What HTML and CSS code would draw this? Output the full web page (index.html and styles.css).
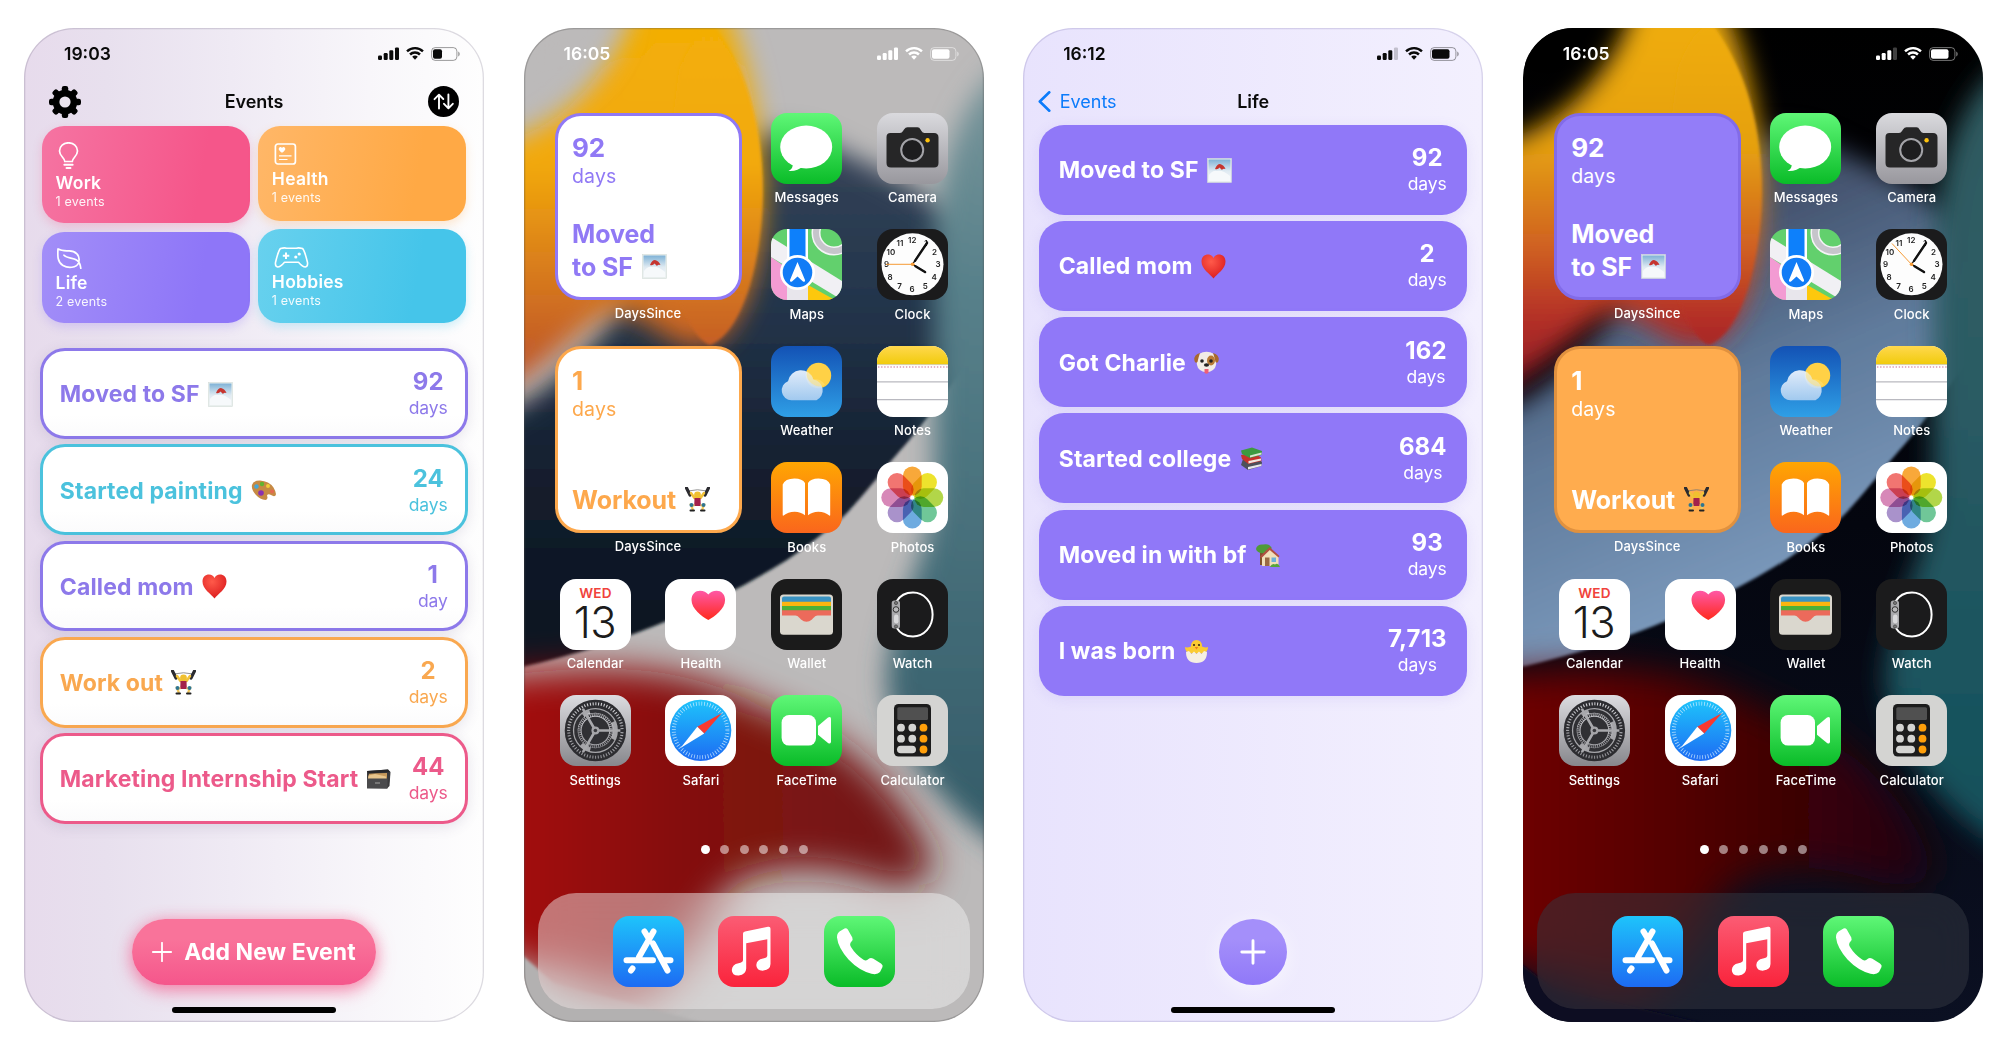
FILE: index.html
```html
<!DOCTYPE html>
<html lang="en">
<head>
<meta charset="utf-8">
<title>DaysSince</title>
<link rel="stylesheet" href="styles.css">
</head>
<body>
<svg class="defs" width="0" height="0" aria-hidden="true">
  <defs>
    <linearGradient id="g-green" x2="0" y2="1"><stop offset="0" stop-color="#5ff777"/><stop offset="1" stop-color="#0abc28"/></linearGradient>
    <linearGradient id="g-camera" x2="0" y2="1"><stop offset="0" stop-color="#dadade"/><stop offset="1" stop-color="#98979d"/></linearGradient>
    <linearGradient id="g-weather" x2="0" y2="1"><stop offset="0" stop-color="#1352b5"/><stop offset="1" stop-color="#2f9fe6"/></linearGradient>
    <linearGradient id="g-cloud" gradientUnits="userSpaceOnUse" x1="0" y1="22" x2="0" y2="55"><stop offset="0" stop-color="#f4f8ff"/><stop offset="1" stop-color="#a9cdf0"/></linearGradient>
    <linearGradient id="g-notes" x2="0" y2="1"><stop offset="0" stop-color="#ffd84e"/><stop offset="1" stop-color="#f1cb0c"/></linearGradient>
    <linearGradient id="g-books" x2="0" y2="1"><stop offset="0" stop-color="#ffa602"/><stop offset="1" stop-color="#fa661c"/></linearGradient>
    <linearGradient id="g-heart" x2="0" y2="1"><stop offset="0" stop-color="#ff58a6"/><stop offset="1" stop-color="#ff2a1c"/></linearGradient>
    <linearGradient id="g-settings" x2="0" y2="1"><stop offset="0" stop-color="#dcdce0"/><stop offset="1" stop-color="#87878c"/></linearGradient>
    <linearGradient id="g-blue" x2="0" y2="1"><stop offset="0" stop-color="#1ec4fb"/><stop offset="1" stop-color="#1d6bf3"/></linearGradient>
    <linearGradient id="g-music" x2="0" y2="1"><stop offset="0" stop-color="#fb5c74"/><stop offset="1" stop-color="#fa233b"/></linearGradient>
    <linearGradient id="g-sky" x2="0" y2="1"><stop offset="0" stop-color="#7fb2d6"/><stop offset=".55" stop-color="#dfeaf2"/><stop offset="1" stop-color="#f3f6f8"/></linearGradient>
    <radialGradient id="g-redheart" cx=".4" cy=".3" r=".8"><stop offset="0" stop-color="#ff5a4a"/><stop offset="1" stop-color="#d8161a"/></radialGradient>
    <linearGradient id="petal-light" gradientUnits="userSpaceOnUse" x1="0" y1="0" x2="0" y2="340"><stop offset="0" stop-color="#f3ae06"/><stop offset=".4" stop-color="#f2a909"/><stop offset=".7" stop-color="#d97d1c"/><stop offset="1" stop-color="#bf5528"/></linearGradient>
    <linearGradient id="petal-dark" gradientUnits="userSpaceOnUse" x1="0" y1="0" x2="0" y2="340"><stop offset="0" stop-color="#efac0e"/><stop offset=".35" stop-color="#e5a010"/><stop offset=".65" stop-color="#cf5f22"/><stop offset=".85" stop-color="#b42f26"/><stop offset="1" stop-color="#9c2226"/></linearGradient>
    <linearGradient id="sea-light" x2="0" y2="1"><stop offset="0" stop-color="#3a4759"/><stop offset=".35" stop-color="#24364d"/><stop offset=".7" stop-color="#121c2b"/><stop offset="1" stop-color="#0d1320"/></linearGradient>
    <linearGradient id="sea-dark" x1="0" x2=".35" y1="0" y2="1"><stop offset="0" stop-color="#151b2b"/><stop offset=".3" stop-color="#3f4c66"/><stop offset=".6" stop-color="#5f7a9b"/><stop offset="1" stop-color="#809fc2"/></linearGradient>
    <linearGradient id="teal-light" x2="0" y2="1"><stop offset="0" stop-color="#7e999d"/><stop offset=".3" stop-color="#57808a"/><stop offset="1" stop-color="#315966"/></linearGradient>
    <linearGradient id="teal-dark" x2="0" y2="1"><stop offset="0" stop-color="#2f5a60"/><stop offset=".4" stop-color="#2c5b64"/><stop offset="1" stop-color="#0f4f5a"/></linearGradient>
    <linearGradient id="red-light"><stop offset="0" stop-color="#b00610"/><stop offset=".5" stop-color="#83100e"/><stop offset="1" stop-color="#701a17"/></linearGradient>
    <linearGradient id="red-dark"><stop offset="0" stop-color="#7a0207"/><stop offset=".5" stop-color="#520104"/><stop offset="1" stop-color="#200509"/></linearGradient>
    <linearGradient id="night" x2="0" y2="1"><stop offset="0" stop-color="#000"/><stop offset=".5" stop-color="#04060f"/><stop offset="1" stop-color="#0b1022"/></linearGradient>
    <filter id="soft" x="-30%" y="-30%" width="160%" height="160%"><feGaussianBlur stdDeviation="13"/></filter>
    <filter id="mist" x="-60%" y="-60%" width="220%" height="220%"><feGaussianBlur stdDeviation="18"/></filter>
    <filter id="edge" x="-10%" y="-10%" width="120%" height="120%"><feGaussianBlur stdDeviation="1.6"/></filter>
    <mask id="sea-mask" maskUnits="userSpaceOnUse" x="0" y="0" width="460" height="994"><path d="M-60 720V400Q40 370 100 270L225 110Q270 95 320 125Q400 160 450 205L520 260V720Z" fill="#fff" filter="url(#soft)"/></mask>

    <path id="w-petal" d="M118 -40H190C226 20 240 110 239 170C238 235 222 300 185 318C150 328 130 290 95 284C60 286 30 345 -50 375V120C30 110 80 60 118 -40Z"/>
    <path id="w-petal-edge" d="M155 40Q175 -10 192 0C224 45 239 100 239 165C238 235 218 305 186 317C165 310 140 250 140 160Z"/>
    <path id="w-sea" d="M-10 60H470V300C430 350 415 380 368 432C345 460 330 478 319 489Q292 512 263 532Q205 568 150 590Q75 622 -10 641Z"/>
    <path id="w-teal" d="M520 10C436 50 416 130 410 220V470C402 540 362 590 362 655C368 730 436 800 520 845Z"/>
    <path id="w-red" d="M-80 655C60 635 150 630 240 680C320 705 380 765 405 825C415 852 390 864 355 854C300 836 250 836 215 855C180 880 175 930 120 962C80 975 30 950 -80 900Z"/>

    <symbol id="i-signal" viewBox="0 0 21 13"><rect y="8.5" width="4" height="4.5" rx="1.2"/><rect x="5.7" y="6" width="4" height="7" rx="1.2"/><rect x="11.3" y="3.2" width="4" height="9.8" rx="1.2"/></symbol>
    <symbol id="i-wifi" viewBox="0 0 18 13"><path d="M9 0C5.5 0 2.400 1.300.2 3.500L1.900 5.300A10 10 0 0 1 16.100 5.300L17.800 3.500A12.500 12.500 0 0 0 9 0Z"/><path d="M9 4.300A8.200 8.200 0 0 0 3.200 6.600L4.900 8.400A5.900 5.900 0 0 1 13.100 8.400L14.800 6.600A8.200 8.200 0 0 0 9 4.300Z"/><path d="M9 8.600A4 4 0 0 0 6.200 9.800L9 12.800L11.800 9.800A4 4 0 0 0 9 8.600Z"/></symbol>

    <symbol id="a-messages" viewBox="0 0 71 71"><rect width="71" height="71" fill="url(#g-green)"/><ellipse cx="35.200" cy="34" rx="26" ry="21.500" fill="#fff"/><path d="M22 50Q22.500 55 17.500 58Q27 58.500 32 53Z" fill="#fff"/></symbol>
    <symbol id="a-camera" viewBox="0 0 71 71"><rect width="71" height="71" fill="url(#g-camera)"/><path d="M13.500 20H23Q25 20 26 18L27 16.500Q28.500 14.300 30.500 14.300H40.500Q42.500 14.300 43.500 16.500L44.500 18Q45.500 20 47.500 20H57Q61.500 20 61.500 24.500V50Q61.500 54.500 57 54.500H14Q9.500 54.500 9.500 50V24Q9.500 20 13.500 20Z" fill="#262627"/><circle cx="35.200" cy="37" r="11" fill="#1d1d1f" stroke="#a3a3a8" stroke-width="2"/><circle cx="50.600" cy="27.300" r="2.200" fill="#ffc20c"/></symbol>
    <symbol id="a-maps" viewBox="0 0 71 71"><rect width="71" height="71" fill="#62d06d"/><path d="M0 28L16 39V71H0Z" fill="#f39bd3"/><path d="M0 8L71 52V71L0 28Z" fill="#f1f0f4"/><path d="M37 56L64 71H37Z" fill="#fdc80d"/><path d="M16 35H37V71H16Z" fill="#e8e6ec"/><circle cx="63" cy="4" r="18" fill="none" stroke="#f4f4f6" stroke-width="9"/><circle cx="63" cy="4" r="18" fill="none" stroke="#c6c5cb" stroke-width="6"/><path d="M16 0H37V40H16Z" fill="#fff"/><path d="M18.500 0H34.500V40H18.500Z" fill="#0d80fb"/><circle cx="26.500" cy="43.500" r="17.500" fill="#fff"/><circle cx="26.500" cy="43.500" r="14.800" fill="#117cf6"/><path d="M26.500 33L34 51Q34.500 53.500 32 52.500L26.500 47.500L21 52.500Q18.500 53.500 19 51Z" fill="#fff"/></symbol>
    <symbol id="a-clock" viewBox="0 0 71 71"><rect width="71" height="71" fill="#1b1b1c"/><circle cx="35.500" cy="35.300" r="31" fill="#fdfdfd"/>
      <g font-family="Inter, sans-serif" font-size="8" font-weight="600" text-anchor="middle" fill="#222"><text x="35.200" y="13.800">12</text><text x="49" y="17">1</text><text x="57.500" y="26">2</text><text x="61" y="38.200">3</text><text x="57.200" y="50.500">4</text><text x="48.200" y="59.600">5</text><text x="35.200" y="63">6</text><text x="22.500" y="59.600">7</text><text x="13" y="50.500">8</text><text x="9.500" y="38.200">9</text><text x="14" y="26">10</text><text x="23" y="17">11</text></g>
      <path d="M35.500 35.300L50.500 13M35.500 35.300L48.500 43.300" stroke="#111" stroke-width="1.300" stroke-linecap="round"/><path d="M38 31.800L50 14M38.500 37.200L48 43" stroke="#111" stroke-width="2.400" stroke-linecap="round"/></symbol>
    <symbol id="a-weather" viewBox="0 0 71 71"><rect width="71" height="71" fill="url(#g-weather)"/><circle cx="47.500" cy="29.500" r="12.700" fill="#ffd146"/><g fill="url(#g-cloud)" opacity=".93"><path d="M20.500 54.300A9.900 9.900 0 0 1 17 35.200A13 13 0 0 1 42.300 33.500A11 11 0 0 1 45.500 54.300Z"/></g><path d="M36 25A13 13 0 0 1 42.300 33.500A10.500 10.500 0 0 1 54 39A12.700 12.700 0 0 1 36 25Z" fill="#ffe27a" opacity=".55"/></symbol>
    <symbol id="a-notes" viewBox="0 0 71 71"><rect width="71" height="71" fill="#fff"/><rect width="71" height="18.200" fill="url(#g-notes)"/><path d="M0 18.600H71" stroke="#c9c08f" stroke-width=".8"/><path d="M1 21H71" stroke="#dd9cb4" stroke-width="1.400" stroke-dasharray="1.400 1.700"/><path d="M0 35.800H71M0 53.600H71" stroke="#b9b9c0" stroke-width="1.200"/></symbol>
    <symbol id="a-books" viewBox="0 0 71 71"><rect width="71" height="71" fill="url(#g-books)"/><path d="M11.700 22.500Q14 16.800 23.500 16.600Q31.500 16.800 34 21V53.200Q29.500 49.600 23.500 49.700Q17 49.700 12.600 53.500Q11.700 54 11.700 53ZM59.200 22.500Q57 16.800 47.500 16.600Q39.500 16.800 37 21V53.200Q41.500 49.600 47.500 49.700Q54 49.700 58.300 53.500Q59.200 54 59.200 53Z" fill="#fff"/></symbol>
    <symbol id="a-photos" viewBox="0 0 71 71"><rect width="71" height="71" fill="#fff"/><g class="petals" transform="translate(35.300 35.600)"><rect x="-9.400" y="-31" width="18.800" height="29" rx="9.400" fill="#f79c1e"/><rect x="-9.400" y="-31" width="18.800" height="29" rx="9.400" fill="#ebe00f" transform="rotate(45)"/><rect x="-9.400" y="-31" width="18.800" height="29" rx="9.400" fill="#a8d12f" transform="rotate(90)"/><rect x="-9.400" y="-31" width="18.800" height="29" rx="9.400" fill="#5cc08a" transform="rotate(135)"/><rect x="-9.400" y="-31" width="18.800" height="29" rx="9.400" fill="#5a9fdc" transform="rotate(180)"/><rect x="-9.400" y="-31" width="18.800" height="29" rx="9.400" fill="#9d83c4" transform="rotate(225)"/><rect x="-9.400" y="-31" width="18.800" height="29" rx="9.400" fill="#d278ae" transform="rotate(270)"/><rect x="-9.400" y="-31" width="18.800" height="29" rx="9.400" fill="#f0625d" transform="rotate(315)"/></g></symbol>
    <symbol id="a-calendar" viewBox="0 0 71 71"><rect width="71" height="71" fill="#fff"/><g font-family="Inter, sans-serif" text-anchor="middle"><text x="35.500" y="18.500" font-size="13.600" font-weight="600" fill="#f0433c" letter-spacing=".2">WED</text><text x="34.800" y="58.500" font-size="43.500" font-weight="300" fill="#1c1c1c" letter-spacing="-.6">13</text></g></symbol>
    <symbol id="a-health" viewBox="0 0 71 71"><rect width="71" height="71" fill="#fff"/><path d="M43.300 41C37 37.500 26.500 30 26.500 21C26.500 15 30.500 11.700 35 11.700C38.500 11.700 41.500 13 43.300 15.500C45.100 13 48.100 11.700 51.600 11.700C56.100 11.700 60.100 15 60.100 21C60.100 30 49.600 37.500 43.300 41Z" fill="url(#g-heart)"/></symbol>
    <symbol id="a-wallet" viewBox="0 0 71 71"><rect width="71" height="71" fill="#1b1b1b"/><rect x="9" y="15.600" width="53" height="40.200" rx="3.500" fill="#dad7ce"/><rect x="11" y="17.500" width="49" height="10" rx="2" fill="#3a93c2"/><path d="M11 22.800H60V28H11Z" fill="#fcb50f"/><path d="M11 27H60V32H11Z" fill="#4db038"/><path d="M11 31.300H60V36.500H48C44 36.500 43.500 38 41 40.500Q35.500 45 30 40.500C27.500 38 27 36.500 23 36.500H11Z" fill="#ec6a5b"/></symbol>
    <symbol id="a-watch" viewBox="0 0 71 71"><rect width="71" height="71" fill="#1b1b1c"/><path d="M19.500 22.500C23 16.500 29 13.500 36 13.500C47 13.500 55.600 23 55.600 35.500S47 57.500 36 57.500C29 57.500 23 54.500 19.500 48.500" fill="none" stroke="#fff" stroke-width="2"/><rect x="14.700" y="21.500" width="8.300" height="28" rx="2.500" fill="#a9a9ac"/><circle cx="19" cy="30.500" r="2.800" fill="#b9b9bb" stroke="#333" stroke-width="1"/><rect x="17" y="35.500" width="4.500" height="9" rx="2.200" fill="#d9d9db"/><circle cx="19" cy="24" r="1.600" fill="#777" stroke="#333" stroke-width=".6"/><circle cx="19" cy="47.500" r="1.600" fill="#777" stroke="#333" stroke-width=".6"/></symbol>
    <symbol id="a-settings" viewBox="0 0 71 71"><rect width="71" height="71" fill="url(#g-settings)"/><g fill="none" transform="translate(35.400 35.500)"><circle r="29.500" stroke="#2d2d31" stroke-width="2.400"/><circle r="26.500" stroke="#2d2d31" stroke-width="5" stroke-dasharray="1.700 1.080"/><circle r="23.500" stroke="#2d2d31" stroke-width="3.500"/><circle r="20.500" stroke="#a5a5a9" stroke-width="4"/><g stroke="#303034" stroke-width="3.500"><path d="M-5 18.800A19.500 19.500 0 0 0 17.500 8.600M-13.800 13.800A19.500 19.500 0 0 1 -12.200 -15.200M17.500 -8.600A19.500 19.500 0 0 0 -5.600 -18.700"/></g><circle r="16" stroke="#2d2d31" stroke-width="2.500" stroke-dasharray="1.200 .800"/><circle r="12.800" fill="#303034" stroke="#303034" stroke-width="2"/><path d="M0 0H25M0 0L-12.500 -21.600M0 0L-12.500 21.600" stroke="#a9a9ad" stroke-width="2.600"/><circle r="4" fill="#a5a5a9"/><circle r="1.800" fill="#3a3a3e"/></g></symbol>
    <symbol id="a-safari" viewBox="0 0 71 71"><rect width="71" height="71" fill="#fff"/><circle cx="35.600" cy="35.400" r="30.700" fill="url(#g-blue)"/><circle cx="35.600" cy="35.400" r="26.800" fill="none" stroke="#d6efff" stroke-width="4" stroke-dasharray=".8 2.007" opacity=".8"/><path d="M57 18L39.200 38.600L32.300 31.800Z" fill="#f8392f"/><path d="M15.500 53L32.300 31.800L39.200 38.600Z" fill="#fff"/></symbol>
    <symbol id="a-facetime" viewBox="0 0 71 71"><rect width="71" height="71" fill="url(#g-green)"/><rect x="10.600" y="20" width="34.400" height="30.600" rx="7.500" fill="#fff"/><path d="M47 31L57 22.600Q60 21 60 24V46.500Q60 49.500 57 48L47 39.800Z" fill="#fff"/></symbol>
    <symbol id="a-calculator" viewBox="0 0 71 71"><rect width="71" height="71" fill="#d4d4d2"/><rect x="17" y="9" width="37" height="52.500" rx="4.500" fill="#1c1c1c"/><rect x="20.300" y="12.300" width="30.700" height="12.700" rx="1.500" fill="#505050"/><g fill="#d4d4d2"><circle cx="24" cy="32.700" r="3.900"/><circle cx="35.300" cy="32.700" r="3.900"/><circle cx="24" cy="43.700" r="3.900"/><circle cx="35.300" cy="43.700" r="3.900"/><rect x="20" y="50.700" width="19" height="7.600" rx="3.800"/></g><g fill="#ff9f0a"><circle cx="46.500" cy="32.700" r="3.900"/><circle cx="46.500" cy="43.700" r="3.900"/><circle cx="46.500" cy="54.500" r="3.900"/></g></symbol>
    <symbol id="a-appstore" viewBox="0 0 71 71"><rect width="71" height="71" fill="url(#g-blue)"/><g stroke="#fff" stroke-width="6" stroke-linecap="round" fill="none"><path d="M40.500 15.500L26 41M31.500 15.500L36 23M40 27.500L54.500 54.500M13.500 44.200H40M51 44.200H57.500M19.500 52.500L18 54.500"/></g></symbol>
    <symbol id="a-music" viewBox="0 0 71 71"><rect width="71" height="71" fill="url(#g-music)"/><path d="M25 17.500Q25 15.800 27 15.400L50 10.800Q52.500 10.300 52.500 12.800V48Q52.300 53.600 45.500 54.600Q38.500 55 38.300 49Q38.700 43.500 45 42.500Q49.300 41.800 49.300 39.500V23.200L28.200 27.300V52.500Q28 58.500 20.800 59.500Q14 59.800 13.800 54Q14.200 48.500 20.500 47.300Q25 46.500 25 44Z" fill="#fff"/></symbol>
    <symbol id="a-phone" viewBox="0 0 71 71"><rect width="71" height="71" fill="url(#g-green)"/><path d="M15.500 15.500L20.500 12.500Q22.500 11.800 23.800 13.500L28.300 21.500Q29.300 23.800 27.500 25.500Q25 28 27 31Q31.500 38.500 39.500 43.800Q42.500 45.300 44.500 43Q46.500 41.300 49 42.500L57 47.500Q59.300 49 58.500 51L56 56Q53.500 59 47.500 57.800Q35 54.500 24.500 43.500Q14 31.500 13 21.500Q12.800 17.500 15.500 15.500Z" fill="#fff"/></symbol>

    <symbol id="e-photo" viewBox="0 0 25 25"><rect x=".5" y=".5" width="24" height="24" fill="#e9efee" stroke="#d3dcd9" stroke-width=".6"/><rect x="1.500" y="1.500" width="22" height="21" fill="url(#g-sky)"/><path d="M2 23V17Q6 12 10 13Q16 12 23 18V23Z" fill="#f6f9fb"/><path d="M8 11Q10 6 13 6Q17 7 18.500 11Q16 10 15 12L12.500 9.500Q11 12 8 11Z" fill="#c6352f"/></symbol>
    <symbol id="e-palette" viewBox="0 0 25 25"><path d="M1 7Q2 2.500 9 2.500Q18 3 22.500 9.500Q26 15.500 24.500 17.500Q23 19 20 17Q17 15.500 16 17.500Q17.500 21.500 14.500 22Q9 21.500 5 17Q0 11.500 1 7Z" fill="#c68a44"/><circle cx="5.500" cy="8.500" r="2.200" fill="#45a7d8"/><circle cx="11" cy="6" r="2.200" fill="#62b431"/><circle cx="17" cy="8" r="2" fill="#f1cd38"/><circle cx="21" cy="13.500" r="2" fill="#e46a51"/><circle cx="10" cy="15" r="2.800" fill="#8a31b0"/></symbol>
    <symbol id="e-heart" viewBox="0 0 25 25"><path d="M12.500 24.500C9 20 .5 15 .5 7.500C.5 3 3.500.5 7 .5C9.700.5 11.500 2 12.500 4C13.500 2 15.300.5 18 .5C21.500.5 24.500 3 24.500 7.500C24.500 15 16 20 12.500 24.500Z" fill="url(#g-redheart)"/></symbol>
    <symbol id="e-lifter" viewBox="0 0 25 25"><path d="M3 4Q12.500 1.500 22 4" stroke="#777" stroke-width=".8" fill="none"/><path d="M1.500 1L5 8M23.500 1L20 8" stroke="#2b2b30" stroke-width="3.200" stroke-linecap="round"/><path d="M6 6L9.500 11M19 6L15.500 11" stroke="#f2c33a" stroke-width="2.600" stroke-linecap="round"/><circle cx="12.500" cy="8" r="3.400" fill="#f0c030"/><path d="M9.500 11H15.500L15.800 19H9.200Z" fill="#a3204b"/><path d="M9.500 18.500L6 18L8 23M15.500 18.500L19 18L17 23" stroke="#f0c65a" stroke-width="2.200" fill="none"/><circle cx="6.500" cy="18" r="2" fill="#2f7590"/><circle cx="18.500" cy="18" r="2" fill="#2f7590"/><path d="M5.500 23.500H9M16 23.500H19.500" stroke="#222" stroke-width="2" stroke-linecap="round"/></symbol>
    <symbol id="e-box" viewBox="0 0 25 25"><path d="M1 4L22 2.500L24.500 5L23.500 19L21 21.500L1 21Z" fill="#3a3a3c"/><path d="M3 6.500L21 6V12H2Z" fill="#c79a5c"/><path d="M2.500 8.500L9 7L20 9.500V12H2Z" fill="#e7c58c"/><path d="M1 11.500H21.500V21.500H1Z" fill="#4a4a4c"/><rect x="9" y="15" width="5" height="2" fill="#777"/><path d="M1 4L22 2.500L24 5L3 6.500Z" fill="#262628"/></symbol>
    <symbol id="e-dog" viewBox="0 0 25 25"><path d="M5 4Q12.500-.5 20 4Q23 8 22 15Q21 21 12.500 22.500Q4 21 3 15Q2 8 5 4Z" fill="#f2ece6"/><path d="M6 3Q0 4.500.3 10Q1 14 3.500 12Q4.500 7 6 3ZM19 3Q25 4.500 24.700 10Q24 14 21.500 12Q20.500 7 19 3Z" fill="#a8692d"/><ellipse cx="17" cy="10.500" rx="4" ry="5" fill="#b97a35"/><circle cx="8" cy="11" r="1.800" fill="#222"/><circle cx="17" cy="11" r="1.800" fill="#222"/><ellipse cx="12.500" cy="15" rx="2.600" ry="1.800" fill="#222"/><path d="M10.500 19H14.500V22.500Q12.500 25 10.500 22.500Z" fill="#ee5f77"/></symbol>
    <symbol id="e-books" viewBox="0 0 25 25"><path d="M4 13L17 11L23 16L22.500 20L9 24L2 19Z" fill="#4d515b"/><path d="M9 21L22.500 18V20L9 23.500Z" fill="#e9e9e9"/><path d="M2 9L15 7L22 11.500L22.500 15L9.500 18L3 13Z" fill="#c6322c"/><path d="M9.500 15L22 12.500V14.500L9.500 17.500Z" fill="#f0e9e0"/><path d="M2 4.500L13 1.500L23 5L22.500 9L11 12L3 8Z" fill="#3d9a40"/><path d="M11 9.500L22.500 6.500V8.500L11 11.500Z" fill="#dce8d2"/></symbol>
    <symbol id="e-house" viewBox="0 0 25 25"><path d="M5 8H9V22H5Z" fill="#80512c"/><path d="M1 6Q2 1 8 1.500Q14 0 16.500 4.500Q17 9 11 10Q2 11 1 6Z" fill="#4f9a38"/><path d="M7 13L15 6L23.500 13V23H7Z" fill="#f1dfb9"/><path d="M5 13.500L14.500 4L24.500 13L23.500 14.500L14.800 7L6.500 15Z" fill="#b05040"/><rect x="10" y="14.500" width="4.500" height="8.500" fill="#9a6a44"/><rect x="16.500" y="14.500" width="4.500" height="4.500" fill="#6db1d9"/><path d="M15 24Q17 20 20 21.500Q23 19 25 24Z" fill="#57a53b"/></symbol>
    <symbol id="e-chick" viewBox="0 0 25 25"><path d="M12.500 1Q18 1 18 7.500Q22 9 24 8Q24 13 19 14.500H6Q1 13 1 8Q3 9 7 7.500Q7 1 12.500 1Z" fill="#fbcb32"/><circle cx="10" cy="6" r="1.100" fill="#3a2a10"/><circle cx="15" cy="6" r="1.100" fill="#3a2a10"/><path d="M10.800 8H14.200L12.500 10.500Z" fill="#e77b24"/><path d="M2 13L5 12L7.500 15L10 12.500L12.500 15L15 12.500L17.500 15L20 12L23 13Q23 24 12.500 24Q2 24 2 13Z" fill="#f6efe2"/></symbol>
  </defs>
</svg>

<main class="gallery">

  <!-- Events list -->
  <section class="phone phone--events">
    <div class="status">
      <span class="time">19:03</span>
      <span class="indicators"><svg class="signal" viewBox="0 0 21 13"><use href="#i-signal" width="21" height="13"/><rect x="17" y=".4" width="4" height="12.600" rx="1.200"/></svg><svg class="wifi"><use href="#i-wifi"/></svg><svg class="battery" viewBox="0 0 29 14"><rect x=".6" y=".6" width="25.300" height="12.800" rx="3.600" fill="none" stroke="currentColor" opacity=".4"/><rect x="2" y="2.200" width="9" height="9.600" rx="2"/><path d="M27.200 4.600Q28.800 5.400 28.800 7T27.200 9.400Z" opacity=".4"/></svg></span>
    </div>
    <header class="bar">
      <svg class="gear" viewBox="-16 -16 32 32"><rect x="-3.200" y="-16" width="6.400" height="32" rx="2.200"/><rect x="-3.200" y="-16" width="6.400" height="32" rx="2.200" transform="rotate(45)"/><rect x="-3.200" y="-16" width="6.400" height="32" rx="2.200" transform="rotate(90)"/><rect x="-3.200" y="-16" width="6.400" height="32" rx="2.200" transform="rotate(135)"/><circle r="12.300"/><circle r="5.600" fill="#ebe4ef"/></svg>
      <h1>Events</h1>
      <svg class="sort" viewBox="0 0 31 31"><circle cx="15.500" cy="15.500" r="15.500"/><path d="M11 22.500V9M6.500 13.200L11 8.700L15.300 13M20.400 8.500V22M16 17.800L20.400 22.300L24.800 17.800" fill="none" stroke="#fff" stroke-width="1.900" stroke-linecap="round" stroke-linejoin="round"/></svg>
    </header>
    <div class="categories">
      <div class="stack">
        <article class="cat cat--work"><svg width="26" height="27" viewBox="0 0 26 27"><path d="M8.800 19.500C8.600 15.500 3.500 14 3.500 9C3.500 4 7.500.8 12.500.8S21.500 4 21.500 9C21.500 14 16.500 15.500 16.300 19.500Z" fill="none" stroke="#fff" stroke-width="1.700"/><path d="M8.300 22.800H16.700M10.500 26H14.500" stroke="#fff" stroke-width="1.900" stroke-linecap="round"/></svg><h2>Work</h2><p>1 events</p></article>
        <article class="cat cat--life"><svg width="26" height="21" viewBox="0 0 26 21"><path d="M2 .9C1.500 8 1.500 14.500 7 17.500C12 20.500 20.500 20 22.500 15C25 7 19 2.500 12.500 2.800C8 3 5 2.800 2 .9ZM8 7.200C11 10.500 17 9.500 20.500 12C23.500 14 24.500 17 24.800 20.300" fill="none" stroke="#fff" stroke-width="1.700" stroke-linecap="round" stroke-linejoin="round"/></svg><h2>Life</h2><p>2 events</p></article>
      </div>
      <div class="stack">
        <article class="cat cat--health"><svg width="25" height="22" viewBox="0 0 25 22"><rect x="3.400" y="1" width="20" height="20" rx="2.500" fill="none" stroke="#fff" stroke-width="1.700"/><path d="M10 9.800Q6.500 7.500 6.700 5.800Q7 4 8.600 4.100Q9.600 4.200 10 5.200Q10.400 4.200 11.400 4.100Q13 4 13.300 5.800Q13.500 7.500 10 9.800Z" fill="#fff"/><path d="M7 12.800H19.500M7 16.500H15.500" stroke="#fff" stroke-width="1.200"/></svg><h2>Health</h2><p>1 events</p></article>
        <article class="cat cat--hobbies"><svg width="37" height="21" viewBox="0 0 37 21"><path d="M8.500 1.500Q13 .3 14.500 1.300H24.500Q26 .3 30.500 1.500Q32.500 3 35.500 15.500Q36 19.500 33.300 20Q30.500 20 26.500 15.300H12.500Q8.500 20 5.700 20Q3 19.500 3.500 15.500Q6.500 3 8.500 1.500Z" fill="none" stroke="#fff" stroke-width="1.600" stroke-linejoin="round"/><path d="M14 5.500V12M10.800 8.700H17.300" stroke="#fff" stroke-width="2"/><circle cx="27.200" cy="7" r="1.600" fill="#fff"/><circle cx="23.800" cy="10" r="1.600" fill="#fff"/></svg><h2>Hobbies</h2><p>1 events</p></article>
      </div>
    </div>
    <ul class="events">
      <li class="event purple"><span class="name">Moved to SF<svg class="emoji"><use href="#e-photo"/></svg></span><span class="count"><b>92</b>days</span></li>
      <li class="event cyan"><span class="name">Started painting<svg class="emoji"><use href="#e-palette"/></svg></span><span class="count"><b>24</b>days</span></li>
      <li class="event purple"><span class="name">Called mom<svg class="emoji"><use href="#e-heart"/></svg></span><span class="count"><b>1</b>day</span></li>
      <li class="event orange"><span class="name">Work out<svg class="emoji"><use href="#e-lifter"/></svg></span><span class="count"><b>2</b>days</span></li>
      <li class="event pink"><span class="name">Marketing Internship Start<svg class="emoji"><use href="#e-box"/></svg></span><span class="count"><b>44</b>days</span></li>
    </ul>
    <div class="foot">
      <button class="add"><svg width="20" height="20" viewBox="0 0 20 20"><path d="M10 .8V19.200M.8 10H19.200" stroke="#fff" stroke-width="1.800" stroke-linecap="round"/></svg>Add New Event</button>
      <div class="home"></div>
    </div>
  </section>

  <!-- Home screen, light -->
  <section class="phone phone--home light">
    <svg class="wallpaper" viewBox="0 0 460 994" preserveAspectRatio="none">
      <rect width="460" height="994" fill="#bcbaba"/>
      <g mask="url(#sea-mask)"><use href="#w-sea" fill="url(#sea-light)" filter="url(#edge)"/></g>
      <use href="#w-petal" fill="url(#petal-light)" filter="url(#soft)"/>
      <use href="#w-petal-edge" fill="url(#petal-light)" filter="url(#edge)"/>
      <path d="M-20 -20H90Q70 50 20 60Q0 60 -20 45Z" fill="#bcbaba" filter="url(#mist)"/>
      <use href="#w-teal" fill="url(#teal-light)" filter="url(#soft)"/>
      <use href="#w-red" fill="url(#red-light)" filter="url(#mist)"/>
      <path d="M-10 920L30 955L200 1000H-10Z" fill="#b3b1b1" filter="url(#edge)"/>
    </svg>
    <div class="screen">
      <div class="status">
        <span class="time">16:05</span>
        <span class="indicators"><svg class="signal" viewBox="0 0 21 13"><use href="#i-signal" width="21" height="13"/><rect x="17" y=".4" width="4" height="12.600" rx="1.200"/></svg><svg class="wifi"><use href="#i-wifi"/></svg><svg class="battery" viewBox="0 0 29 14"><rect x=".6" y=".6" width="25.300" height="12.800" rx="3.600" fill="none" stroke="currentColor" opacity=".5"/><rect x="2" y="2.200" width="17.500" height="9.600" rx="2"/><path d="M27.200 4.600Q28.800 5.400 28.800 7T27.200 9.400Z" opacity=".5"/></svg></span>
      </div>
      <div class="apps">
        <div class="app app--widget"><div class="widget purple"><b>92</b><span>days</span><strong>Moved<br>to SF<svg class="emoji"><use href="#e-photo"/></svg></strong></div>DaysSince</div>
        <div class="app"><svg><use href="#a-messages"/></svg>Messages</div>
        <div class="app"><svg><use href="#a-camera"/></svg>Camera</div>
        <div class="app"><svg><use href="#a-maps"/></svg>Maps</div>
        <div class="app"><svg viewBox="0 0 71 71"><use href="#a-clock"/><path d="M38 35.300H9" stroke="#f59a35"/><circle cx="35.500" cy="35.300" r="1.800" fill="#f59a35"/></svg>Clock</div>
        <div class="app app--widget"><div class="widget orange"><b>1</b><span>days</span><strong>Workout<svg class="emoji"><use href="#e-lifter"/></svg></strong></div>DaysSince</div>
        <div class="app"><svg><use href="#a-weather"/></svg>Weather</div>
        <div class="app"><svg><use href="#a-notes"/></svg>Notes</div>
        <div class="app"><svg><use href="#a-books"/></svg>Books</div>
        <div class="app"><svg><use href="#a-photos"/></svg>Photos</div>
        <div class="app"><svg><use href="#a-calendar"/></svg>Calendar</div>
        <div class="app"><svg><use href="#a-health"/></svg>Health</div>
        <div class="app"><svg><use href="#a-wallet"/></svg>Wallet</div>
        <div class="app"><svg><use href="#a-watch"/></svg>Watch</div>
        <div class="app"><svg><use href="#a-settings"/></svg>Settings</div>
        <div class="app"><svg><use href="#a-safari"/></svg>Safari</div>
        <div class="app"><svg><use href="#a-facetime"/></svg>FaceTime</div>
        <div class="app"><svg><use href="#a-calculator"/></svg>Calculator</div>
      </div>
      <div class="pages"><i class="on"></i><i></i><i></i><i></i><i></i><i></i></div>
      <div class="dock"><svg><use href="#a-appstore"/></svg><svg><use href="#a-music"/></svg><svg><use href="#a-phone"/></svg></div>
    </div>
  </section>

  <!-- Life category -->
  <section class="phone phone--life">
    <div class="status">
      <span class="time">16:12</span>
      <span class="indicators"><svg class="signal" viewBox="0 0 21 13"><use href="#i-signal" width="21" height="13"/><rect x="17" y=".4" width="4" height="12.600" rx="1.200" opacity=".2"/></svg><svg class="wifi"><use href="#i-wifi"/></svg><svg class="battery" viewBox="0 0 29 14"><rect x=".6" y=".6" width="25.300" height="12.800" rx="3.600" fill="none" stroke="currentColor" opacity=".4"/><rect x="2" y="2.200" width="17.500" height="9.600" rx="2"/><path d="M27.200 4.600Q28.800 5.400 28.800 7T27.200 9.400Z" opacity=".4"/></svg></span>
    </div>
    <header class="bar">
      <a class="back"><svg width="13" height="21" viewBox="0 0 13 21"><path d="M11.300 1.300L1.800 10.500L11.300 19.700" fill="none" stroke="currentColor" stroke-width="2.600" stroke-linecap="round" stroke-linejoin="round"/></svg>Events</a>
      <h1>Life</h1>
      <span></span>
    </header>
    <ul class="events solid">
      <li class="event"><span class="name">Moved to SF<svg class="emoji"><use href="#e-photo"/></svg></span><span class="count"><b>92</b>days</span></li>
      <li class="event"><span class="name">Called mom<svg class="emoji"><use href="#e-heart"/></svg></span><span class="count"><b>2</b>days</span></li>
      <li class="event"><span class="name">Got Charlie<svg class="emoji"><use href="#e-dog"/></svg></span><span class="count"><b>162</b>days</span></li>
      <li class="event"><span class="name">Started college<svg class="emoji"><use href="#e-books"/></svg></span><span class="count"><b>684</b>days</span></li>
      <li class="event"><span class="name">Moved in with bf<svg class="emoji"><use href="#e-house"/></svg></span><span class="count"><b>93</b>days</span></li>
      <li class="event"><span class="name">I was born<svg class="emoji"><use href="#e-chick"/></svg></span><span class="count"><b>7,713</b>days</span></li>
    </ul>
    <div class="foot">
      <button class="plus"><svg width="26" height="26" viewBox="0 0 26 26"><path d="M13 1.800V24.200M1.800 13H24.200" stroke="#fff" stroke-width="2.900" stroke-linecap="round"/></svg></button>
      <div class="home"></div>
    </div>
  </section>

  <!-- Home screen, dark -->
  <section class="phone phone--home dark">
    <svg class="wallpaper" viewBox="0 0 460 994" preserveAspectRatio="none">
      <rect width="460" height="994" fill="url(#night)"/>
      <g mask="url(#sea-mask)"><use href="#w-sea" fill="url(#sea-dark)" filter="url(#edge)"/></g>
      <use href="#w-petal" fill="url(#petal-dark)" filter="url(#soft)"/>
      <use href="#w-petal-edge" fill="url(#petal-dark)" filter="url(#edge)"/>
      <path d="M-20 -20H90Q75 45 20 50Q0 45 -20 25Z" fill="#000" filter="url(#mist)"/>
      <use href="#w-teal" fill="url(#teal-dark)" filter="url(#soft)"/>
      <use href="#w-red" fill="url(#red-dark)" filter="url(#mist)"/>
      <path d="M-10 930L30 960L200 1000H-10Z" fill="#0b1022" filter="url(#edge)"/>
    </svg>
    <div class="screen">
      <div class="status">
        <span class="time">16:05</span>
        <span class="indicators"><svg class="signal" viewBox="0 0 21 13"><use href="#i-signal" width="21" height="13"/><rect x="17" y=".4" width="4" height="12.600" rx="1.200" opacity=".25"/></svg><svg class="wifi"><use href="#i-wifi"/></svg><svg class="battery" viewBox="0 0 29 14"><rect x=".6" y=".6" width="25.300" height="12.800" rx="3.600" fill="none" stroke="currentColor" opacity=".45"/><rect x="2" y="2.200" width="17.500" height="9.600" rx="2"/><path d="M27.200 4.600Q28.800 5.400 28.800 7T27.200 9.400Z" opacity=".45"/></svg></span>
      </div>
      <div class="apps">
        <div class="app app--widget"><div class="widget purple"><b>92</b><span>days</span><strong>Moved<br>to SF<svg class="emoji"><use href="#e-photo"/></svg></strong></div>DaysSince</div>
        <div class="app"><svg><use href="#a-messages"/></svg>Messages</div>
        <div class="app"><svg><use href="#a-camera"/></svg>Camera</div>
        <div class="app"><svg><use href="#a-maps"/></svg>Maps</div>
        <div class="app"><svg viewBox="0 0 71 71"><use href="#a-clock"/><path d="M37 37L16 14.500" stroke="#f59a35"/><circle cx="35.500" cy="35.300" r="1.800" fill="#f59a35"/></svg>Clock</div>
        <div class="app app--widget"><div class="widget orange"><b>1</b><span>days</span><strong>Workout<svg class="emoji"><use href="#e-lifter"/></svg></strong></div>DaysSince</div>
        <div class="app"><svg><use href="#a-weather"/></svg>Weather</div>
        <div class="app"><svg><use href="#a-notes"/></svg>Notes</div>
        <div class="app"><svg><use href="#a-books"/></svg>Books</div>
        <div class="app"><svg><use href="#a-photos"/></svg>Photos</div>
        <div class="app"><svg><use href="#a-calendar"/></svg>Calendar</div>
        <div class="app"><svg><use href="#a-health"/></svg>Health</div>
        <div class="app"><svg><use href="#a-wallet"/></svg>Wallet</div>
        <div class="app"><svg><use href="#a-watch"/></svg>Watch</div>
        <div class="app"><svg><use href="#a-settings"/></svg>Settings</div>
        <div class="app"><svg><use href="#a-safari"/></svg>Safari</div>
        <div class="app"><svg><use href="#a-facetime"/></svg>FaceTime</div>
        <div class="app"><svg><use href="#a-calculator"/></svg>Calculator</div>
      </div>
      <div class="pages"><i class="on"></i><i></i><i></i><i></i><i></i><i></i></div>
      <div class="dock"><svg><use href="#a-appstore"/></svg><svg><use href="#a-music"/></svg><svg><use href="#a-phone"/></svg></div>
    </div>
  </section>
</main>
</body>
</html>
```

FILE: styles.css
```css
* { box-sizing: border-box; }
body { margin: 0; background: #fff; font-family: Inter, "Liberation Sans", sans-serif; color: #0a0a0a; }
h1, h2, p, ul { margin: 0; padding: 0; }
ul { list-style: none; }
button { border: 0; font: inherit; padding: 0; }
.defs { display: block; height: 0; }

.gallery { display: flex; gap: 39.600px; padding: 28.300px 24px; width: 2006px; }
.phone { width: 460px; height: 994px; flex: none; border-radius: 50px; overflow: hidden; display: flex; flex-direction: column; }
.phone--events { background: linear-gradient(90deg, #e7dbec 0, #e8e0ee 18%, #efeaf4 45%, #f8f6fa 75%, #fefefe 100%); box-shadow: inset 0 0 0 1.300px rgba(90, 80, 110, .2); }
.phone--life { background: linear-gradient(90deg, #e8e3fd, #f3f0fe); box-shadow: inset 0 0 0 1.300px rgba(90, 80, 150, .18); }

/* status bar */
.status { display: flex; justify-content: space-between; align-items: center; height: 51px; padding: 0 24.500px 0 40px; flex: none; }
.time { font-size: 17.500px; font-weight: 600; letter-spacing: 0; }
.indicators { display: flex; align-items: center; }
.indicators svg { fill: currentColor; display: block; }
.signal { width: 21px; height: 13px; margin-right: 7px; }
.wifi { width: 18px; height: 13px; margin-right: 7px; }
.battery { width: 29px; height: 14px; }

/* navigation bar */
.bar { display: grid; grid-template-columns: 1fr auto 1fr; align-items: center; height: 45px; margin-bottom: 2px; flex: none; }
.bar h1 { font-size: 18px; font-weight: 600; letter-spacing: -.05px; }
.phone--events .bar { padding: 0 25px; }
.gear { width: 32px; height: 32px; display: block; }
.sort { width: 31px; height: 31px; justify-self: end; display: block; }
.phone--life .bar { padding: 0 14.500px; }
.back { display: flex; align-items: center; gap: 9px; color: #0b7bfb; font-size: 18px; }

/* categories */
.categories { display: flex; gap: 8.700px; padding: 0 18px; height: 197px; flex: none; }
.stack { display: flex; flex-direction: column; flex: 1; justify-content: space-between; }
.cat { border-radius: 22px; padding-left: 13.500px; color: #fff; }
.cat svg { display: block; margin-bottom: 4px; }
.cat h2 { font-size: 17.500px; font-weight: 600; line-height: 20px; letter-spacing: .25px; }
.cat p { font-size: 12.500px; line-height: 18px; letter-spacing: .2px; opacity: .92; }
.cat--work { height: 96.600px; padding-top: 16px; background: linear-gradient(100deg, #f574a2, #f5568a 75%); box-shadow: 0 4px 10px rgba(245, 87, 137, .25); }
.cat--life { height: 91px; padding-top: 16px; background: linear-gradient(100deg, #a28ef8, #8e76f8 75%); box-shadow: 0 4px 10px rgba(142, 118, 248, .25); }
.cat--health { height: 94.300px; padding-top: 17px; background: linear-gradient(100deg, #ffb768, #ffa945 75%); box-shadow: 0 4px 10px rgba(255, 171, 75, .25); }
.cat--hobbies { height: 94px; padding-top: 18px; background: linear-gradient(100deg, #68d1ee, #45c5ea 75%); box-shadow: 0 4px 10px rgba(70, 198, 234, .25); }

/* event rows */
.events { display: flex; flex-direction: column; gap: 5.500px; padding: 25px 16.300px 0; }
.event { display: flex; justify-content: space-between; align-items: center; height: 90.700px; padding: 1.500px 17px 0 16.500px; border: 3.500px solid currentColor; border-radius: 25px; background: linear-gradient(#fff 75%, #fbfbfc); box-shadow: 0 3px 14px rgba(90, 80, 120, .14); }
.name { display: flex; align-items: center; gap: 8px; font-size: 23px; font-weight: 700; letter-spacing: .13px; white-space: nowrap; }
.emoji { width: 25px; height: 25px; flex: none; }
.count { display: flex; flex-direction: column; align-items: center; font-size: 17.500px; line-height: 24px; letter-spacing: -.1px; }
.count b { font-size: 24px; line-height: 28px; font-weight: 700; letter-spacing: .1px; }
.event.purple { color: #8d79ea; }
.event.cyan { color: #4bc2dd; }
.event.orange { color: #f9a850; }
.event.pink { color: #ec5a8a; }
.events.solid { padding: 0 16px; gap: 6.200px; margin-top: -1.500px; }
.solid .event { height: 90px; border: 0; padding: 1px 20.500px 0 19.500px; color: #fff; background: #9078f8; box-shadow: 0 3px 14px rgba(120, 100, 220, .12); }

.foot { margin-top: auto; display: flex; flex-direction: column; align-items: center; padding-bottom: 9px; }
.home { width: 164px; height: 6px; border-radius: 3px; background: #000; }
.add { display: flex; align-items: center; justify-content: center; gap: 12px; width: 243.500px; height: 65.500px; margin-bottom: 22.700px; border-radius: 33px; color: #fff; font-size: 23px; font-weight: 700; letter-spacing: .05px; background: linear-gradient(#f9739a 30%, #f5568b); box-shadow: 0 6px 18px rgba(245, 87, 137, .6), 0 0 14px rgba(245, 87, 137, .3); white-space: nowrap; }
.plus { display: grid; place-items: center; width: 68px; height: 66px; margin-bottom: 22.500px; border-radius: 50%; background: linear-gradient(#a48ffa 30%, #9078f8); box-shadow: 0 4px 22px rgba(255, 255, 255, .6); }

/* home screens */
.phone--home { display: grid; color: #fff; }
.wallpaper, .screen { grid-area: 1 / 1; }
.wallpaper { width: 460px; height: 994px; display: block; }
.screen { display: flex; flex-direction: column; z-index: 1; border-radius: 50px; }
.light .screen { box-shadow: inset 0 0 0 1.300px rgba(80, 80, 80, .3); }
.apps { display: grid; grid-template-columns: repeat(4, 105.800px); grid-auto-rows: 116.450px; padding: 33.500px 0 0 18.700px; height: 732px; flex: none; }
.app { display: flex; flex-direction: column; align-items: center; gap: 5.700px; font-size: 13px; font-weight: 500; line-height: 16px; letter-spacing: .1px; }
.app > svg, .dock svg { width: 71px; height: 71px; border-radius: 16px; display: block; flex: none; overflow: hidden; }
.app--widget { grid-column: span 2; grid-row: span 2; }
.petals { isolation: isolate; }
.petals rect { mix-blend-mode: multiply; opacity: .88; }
.widget { width: 187px; height: 187px; flex: none; border: 3px solid currentColor; border-radius: 26px; padding: 16px 15px 13px 14.500px; background: #fff; display: flex; flex-direction: column; }
.widget b { font-size: 26px; line-height: 31px; font-weight: 700; letter-spacing: -.2px; }
.widget span { font-size: 19.500px; line-height: 26px; font-weight: 400; }
.widget strong { margin-top: auto; font-size: 25px; line-height: 33px; font-weight: 700; letter-spacing: -.1px; }
.widget .emoji { margin-left: 9px; vertical-align: -3px; }
.light .widget.purple { color: #9079f5; }
.light .widget.orange { color: #fda84c; }
.dark .widget { color: #fff; }
.dark .widget.purple { background: #937df8; border-color: #826be8; }
.dark .widget.orange { background: #ffac4e; border-color: #e0913f; }
.pages { display: flex; justify-content: center; gap: 10.600px; margin: 33.500px 0 0 1px; }
.pages i { width: 9px; height: 9px; border-radius: 50%; background: #fff; opacity: .5; }
.pages .on { opacity: 1; }
.dock { margin: auto 14px 13.500px 14.500px; height: 115.500px; border-radius: 38px; display: flex; justify-content: center; align-items: center; gap: 34.800px; }
.light .dock { background: rgba(245, 244, 244, .45); backdrop-filter: blur(18px); }
.dark .dock { background: rgba(52, 56, 66, .5); backdrop-filter: blur(18px); }
```
